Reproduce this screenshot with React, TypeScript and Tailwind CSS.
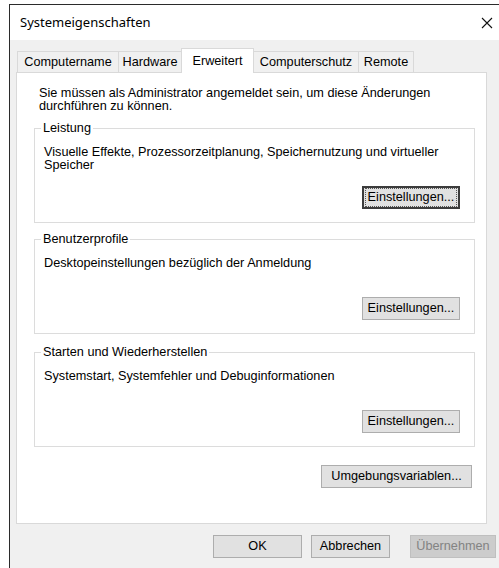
import React from "react";

const body = "font-['Liberation_Sans',Arial,sans-serif] text-[12.7px] text-black";

function WinButton({
  children,
  className = "",
  focused = false,
  disabled = false,
}: {
  children: React.ReactNode;
  className?: string;
  focused?: boolean;
  disabled?: boolean;
}) {
  const tone = disabled
    ? "bg-[#cccccc] border border-[#bfbfbf] text-[#838383]"
    : focused
    ? "bg-[#e1e1e1] border-2 border-[#3c3c3c] text-black"
    : "bg-[#e1e1e1] border border-[#adadad] text-black";
  return (
    <button
      disabled={disabled}
      className={`h-[23px] shrink-0 flex items-center justify-center leading-none ${tone} ${className}`}
    >
      {focused ? (
        <span className="px-[2px] py-[2px] outline outline-1 outline-dotted outline-[#555]">
          {children}
        </span>
      ) : (
        children
      )}
    </button>
  );
}

function Group({
  title,
  lines,
  focused = false,
  className = "",
}: {
  title: string;
  lines: string[];
  focused?: boolean;
  className?: string;
}) {
  return (
    <fieldset className={`w-[441px] border border-[#dcdcdc] px-[9px] pb-[13px] ${className}`}>
      <legend className="-ml-[3px] px-[2px] leading-[13px]">{title}</legend>
      <div className="h-[74px] flex flex-col justify-between">
        <div className="leading-[13px] pt-[11px]">
          {lines.map((l) => (
            <div key={l}>{l}</div>
          ))}
        </div>
        <div className="flex justify-end pr-[5px]">
          <WinButton focused={focused} className="w-[98px]">
            Einstellungen...
          </WinButton>
        </div>
      </div>
    </fieldset>
  );
}

const tabs: { label: string; w: string; active?: boolean }[] = [
  { label: "Computername", w: "w-[102px]" },
  { label: "Hardware", w: "w-[64px]" },
  { label: "Erweitert", w: "w-[73px]", active: true },
  { label: "Computerschutz", w: "w-[106px]" },
  { label: "Remote", w: "w-[56px]" },
];

export default function App() {
  return (
    <div className={`w-[499px] h-[568px] overflow-hidden bg-white ${body}`}>
      <div className="ml-[9px] mt-[4px] w-[520px] h-[600px] border-l border-t border-[#2b2b2b] bg-[#f0f0f0]">
        {/* title bar */}
        <div className="h-[35px] w-[489px] bg-white flex items-center justify-between pl-[10px]">
          <span className="font-['Noto_Sans',sans-serif] text-[13px] text-black">
            Systemeigenschaften
          </span>
          <svg width="12" height="12" viewBox="0 0 12 12" className="mr-[6px]">
            <path d="M1 1 L11 11 M11 1 L1 11" stroke="#111" strokeWidth="1.1" />
          </svg>
        </div>

        <div className="w-[489px] pl-[6px]">
          {/* tab strip */}
          <div className="flex items-end h-[32px] pl-[1px] relative z-10">
            {tabs.map((t) =>
              t.active ? (
                <div
                  key={t.label}
                  className={`${t.w} h-[25px] -mb-px -mr-px bg-white border border-b-0 border-[#d9d9d9] flex justify-center pt-[3px]`}
                >
                  {t.label}
                </div>
              ) : (
                <div
                  key={t.label}
                  className={`${t.w} h-[21px] -mr-px bg-[#f0f0f0] border border-b-0 border-[#d9d9d9] flex items-center justify-center pt-[2px]`}
                >
                  {t.label}
                </div>
              )
            )}
          </div>

          {/* tab page */}
          <div className="w-[471px] h-[452px] bg-white border border-[#d9d9d9] pl-[17px] pt-[14px] flex flex-col">
            <div className="pl-[5px] leading-[13px]">
              <div>Sie müssen als Administrator angemeldet sein, um diese Änderungen</div>
              <div>durchführen zu können.</div>
            </div>

            <Group
              className="mt-[9px]"
              title="Leistung"
              focused
              lines={[
                "Visuelle Effekte, Prozessorzeitplanung, Speichernutzung und virtueller",
                "Speicher",
              ]}
            />
            <Group
              className="mt-[10px]"
              title="Benutzerprofile"
              lines={["Desktopeinstellungen bezüglich der Anmeldung"]}
            />
            <Group
              className="mt-[12px]"
              title="Starten und Wiederherstellen"
              lines={["Systemstart, Systemfehler und Debuginformationen"]}
            />

            <div className="flex w-[438px] justify-end mt-[18px]">
              <WinButton className="w-[151px]">Umgebungsvariablen...</WinButton>
            </div>
          </div>
        </div>

        {/* dialog buttons */}
        <div className="flex w-[489px] pl-[203px] mt-[11px]">
          <WinButton className="w-[89px]">OK</WinButton>
          <WinButton className="w-[79px] ml-[9px]">Abbrechen</WinButton>
          <WinButton disabled className="w-[86px] ml-[20px]">
            Übernehmen
          </WinButton>
        </div>
      </div>
    </div>
  );
}
